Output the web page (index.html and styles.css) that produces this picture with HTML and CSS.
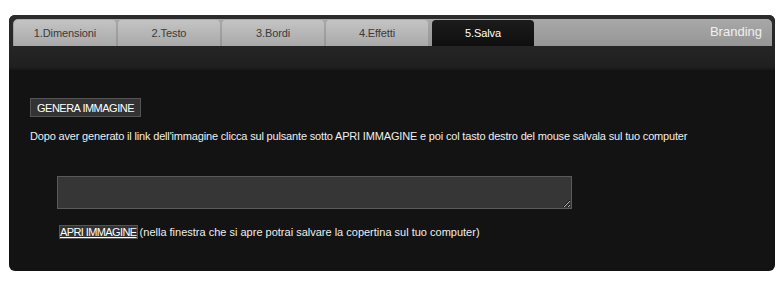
FILE: index.html
```html
<!DOCTYPE html>
<html lang="it">
<head>
    <meta charset="UTF-8">
    <title>Salva copertina</title>
    <link rel="stylesheet" href="styles.css">
</head>
<body>
    <div class="panel">
        <div class="header">
            <div class="tabbar">
                <a class="tab" href="#">1.Dimensioni</a>
                <a class="tab" href="#">2.Testo</a>
                <a class="tab" href="#">3.Bordi</a>
                <a class="tab" href="#">4.Effetti</a>
                <a class="tab active" href="#">5.Salva</a>
                <span class="brand">Branding</span>
            </div>
        </div>
        <div class="content">
            <button class="btn">GENERA IMMAGINE</button>
            <p class="info">Dopo aver generato il link dell'immagine clicca sul pulsante sotto APRI IMMAGINE e poi col tasto destro del mouse salvala sul tuo computer</p>
            <textarea class="link-box"></textarea>
            <p class="open-row"><a class="open-link" href="#">APRI IMMAGINE</a> (nella finestra che si apre potrai salvare la copertina sul tuo computer)</p>
        </div>
    </div>
</body>
</html>
```

FILE: styles.css
```css
body {
    margin: 0;
    background-color: #ffffff;
    font-family: "Liberation Sans", Arial, sans-serif;
    font-size: 11px;
}
.panel {
    width: 766px;
    height: 256px;
    margin: 15px 0 0 9px;
    background-color: #131313;
    border-radius: 6px;
    overflow: hidden;
}
.header {
    padding: 4px 3px 0 4px;
    height: 51px;
    background: linear-gradient(#2c2c2c 0, #232323 40px, #1f1f1f 52px, #141414 56px);
}
.tabbar {
    display: flex;
    gap: 2px;
    height: 27px;
    padding: 1px 0 0 1px;
    box-sizing: border-box;
    background: linear-gradient(#a8a8a8, #969696);
    border-radius: 5px 5px 0 0;
}
.tab {
    width: 102px;
    line-height: 26px;
    text-align: center;
    color: #3a3a3a;
    letter-spacing: -0.1px;
    text-decoration: none;
    background: linear-gradient(#c4c4c4, #a9a9a9);
    border-radius: 4px 4px 0 0;
}
.tab.active {
    margin-left: 2px;
    color: #ffffff;
    background: linear-gradient(#1c1c1c, #0f0f0f);
}
.brand {
    margin-left: auto;
    padding-right: 10px;
    line-height: 24px;
    font-size: 13px;
    color: #f0f0f0;
}
.content {
    padding: 28px 0 0 21px;
    color: #eeeeee;
    letter-spacing: -0.17px;
}
.btn {
    display: block;
    height: 19px;
    padding: 0 6px;
    font-family: inherit;
    font-size: 11px;
    letter-spacing: -0.5px;
    color: #ffffff;
    background-color: #333333;
    border: 1px solid #555555;
    cursor: pointer;
}
.info {
    margin: 12px 0 0 0;
    line-height: 14px;
}
.link-box {
    display: block;
    width: 515px;
    height: 33px;
    margin: 33px 0 0 27px;
    box-sizing: border-box;
    background-color: #363636;
    border: 1px solid #5a5a5a;
    resize: both;
}
.open-row {
    margin: 16px 0 0 30px;
    line-height: 15px;
    letter-spacing: 0;
}
.open-link {
    color: #ffffff;
    background-color: #333333;
    outline: 1px solid #555555;
    letter-spacing: -0.6px;
}
```
